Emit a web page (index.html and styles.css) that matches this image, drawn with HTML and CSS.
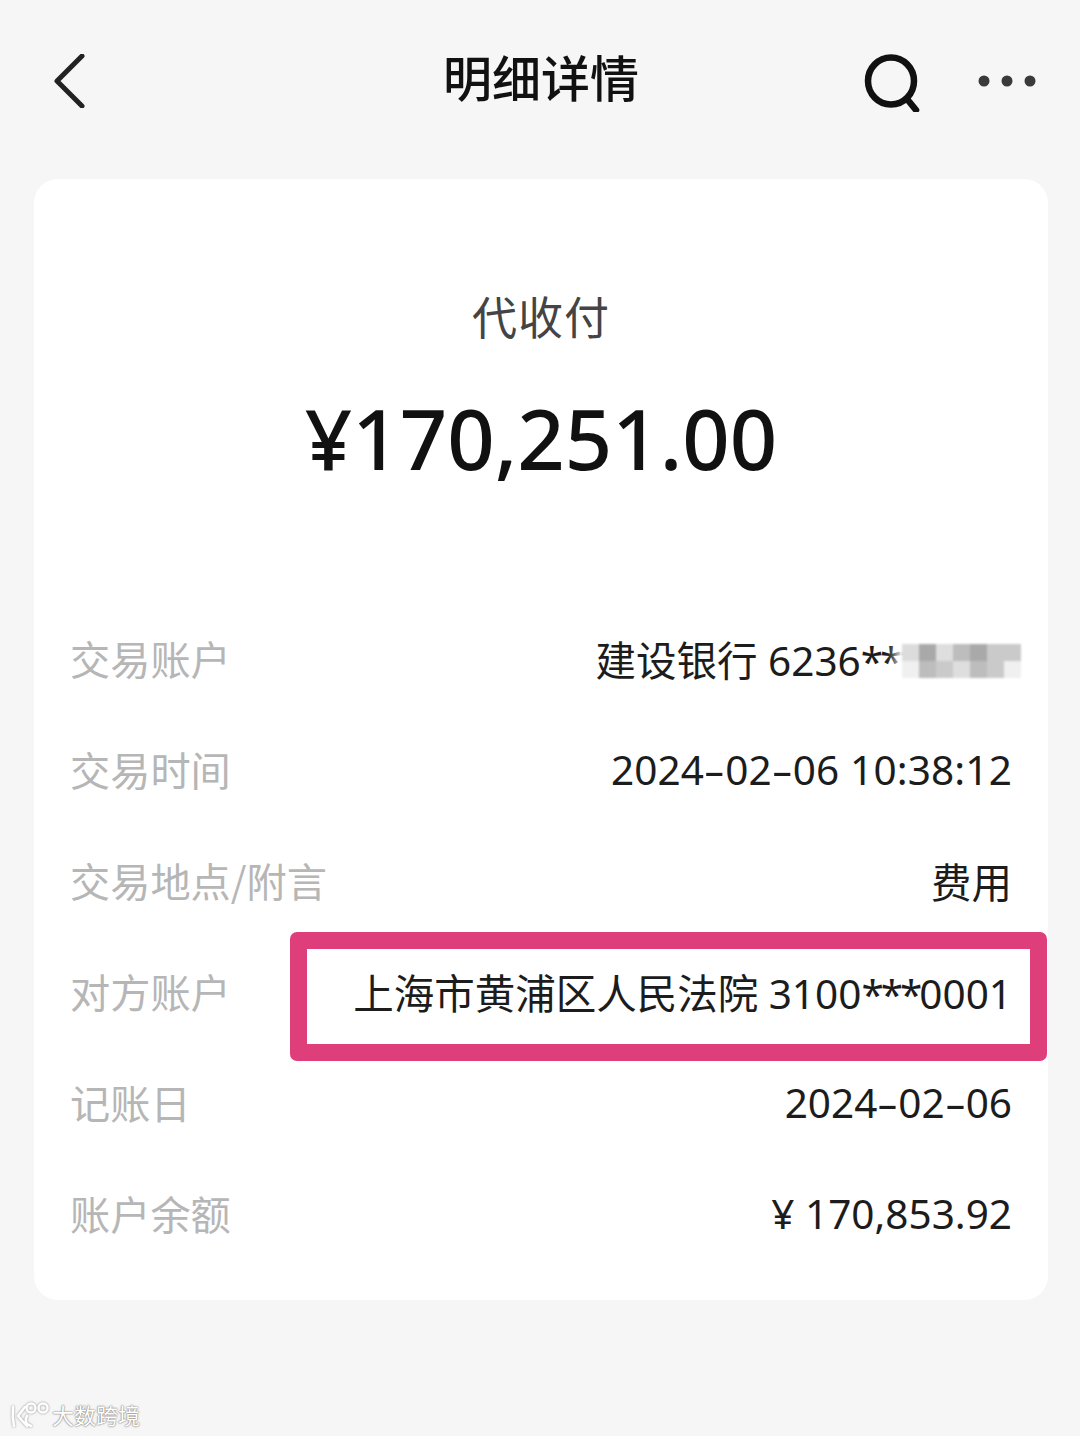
FILE: index.html
```html
<!DOCTYPE html>
<html lang="zh-CN">
<head>
<meta charset="utf-8">
<title>明细详情</title>
<link rel="stylesheet" href="styles.css">
</head>
<body>
<div class="page">
  <header class="nav">
    <svg class="icon-back" width="32" height="54" viewBox="0 0 32 54"><path d="M28 2 L3 27 L28 52"/></svg>
    <h1 class="nav-title">明细详情</h1>
    <div class="nav-actions">
      <svg class="icon-search" width="58" height="58" viewBox="0 0 58 58"><ellipse cx="27" cy="27" rx="23" ry="23.5"/><path d="M43 45 L52 56"/></svg>
      <svg class="icon-more" width="58" height="14" viewBox="0 0 58 14"><circle cx="6" cy="7" r="5.5"/><circle cx="29" cy="7" r="5.5"/><circle cx="52" cy="7" r="5.5"/></svg>
    </div>
  </header>
  <main class="card">
    <section class="summary">
      <div class="summary-type">代收付</div>
      <div class="summary-amount">¥170,251.00</div>
    </section>
    <section class="rows">
      <div class="row"><span class="label">交易账户</span>
        <span class="value value-masked">建设银行 6236<span class="stars">***</span><span class="masked-tail">****</span>
          <span class="mosaic">
            <i class="m1"></i><i class="m2"></i><i class="m5"></i><i class="m3"></i><i class="m2"></i><i class="m4"></i><i class="m4"></i>
            <i class="m6"></i><i class="m3"></i><i class="m4"></i><i class="m5"></i><i class="m3"></i><i class="m4"></i><i class="m6"></i>
          </span>
        </span>
      </div>
      <div class="row"><span class="label">交易时间</span><span class="value value-time">2024<span class="dash">-</span>02<span class="dash">-</span>06 10:38:12</span></div>
      <div class="row"><span class="label">交易地点/附言</span><span class="value">费用</span></div>
      <div class="row"><span class="label">对方账户</span><span class="value">上海市黄浦区人民法院 3100<span class="stars">***</span>0001</span><span class="highlight"></span></div>
      <div class="row"><span class="label">记账日</span><span class="value">2024<span class="dash">-</span>02<span class="dash">-</span>06</span></div>
      <div class="row"><span class="label">账户余额</span><span class="value">¥ 170,853.92</span></div>
    </section>
  </main>
  <footer class="watermark">
    <svg class="wm-logo" width="43" height="30" viewBox="0 0 43 30"><path d="M4 8 Q3 18 5 27 M16 8 L9 17 L18 27"/><path d="M22 27 Q14 24 18 17"/><circle cx="22" cy="9" r="4.5"/><circle cx="34" cy="9" r="4.5"/></svg>
    <span class="wm-text">大数跨境</span>
  </footer>
</div>
</body>
</html>
```
FILE: styles.css
```css
* { box-sizing: border-box; }
html, body { margin: 0; padding: 0; }
body {
  background: #f6f6f6;
  font-family: "Noto Sans", "Noto Sans CJK SC", sans-serif;
  color: #1a1a1a;
}
.page {
  width: 1080px;
  height: 1436px;
  overflow: hidden;
  display: flex;
  flex-direction: column;
}
.nav {
  height: 179px;
  padding: 0 43px 18px 54px;
  display: flex;
  align-items: center;
  justify-content: space-between;
  position: relative;
}
.icon-back path {
  fill: none;
  stroke: #222;
  stroke-width: 5;
  stroke-linecap: round;
  stroke-linejoin: round;
}
.nav-title {
  margin: 0;
  position: absolute;
  left: 2px;
  right: 0;
  top: 47px;
  text-align: center;
  font-family: "Noto Sans CJK SC", sans-serif;
  font-size: 49px;
  line-height: 58px;
  font-weight: 500;
  color: #111;
}
.nav-actions {
  display: flex;
  align-items: center;
  gap: 57px;
}
.icon-search { margin-top: 5px; }
.icon-search ellipse, .icon-search path {
  fill: none;
  stroke: #111;
  stroke-width: 6.5;
  stroke-linecap: round;
}
.icon-more { fill: #3a3a3a; margin-top: 1px; margin-left: -1px; margin-right: 1px; }
.card {
  margin: 0 32px 0 34px;
  height: 1121px;
  background: #fff;
  border-radius: 24px;
  padding: 0 36px;
}
.summary {
  height: 426px;
  text-align: center;
  padding-top: 105px;
}
.summary-type {
  font-family: "Noto Sans CJK SC", sans-serif;
  font-size: 45px;
  line-height: 64px;
  color: #444;
  letter-spacing: 1px;
}
.summary-amount {
  margin-top: 42px;
  font-size: 83px;
  line-height: 96px;
  font-weight: 500;
  color: #111;
}
.rows { display: flex; flex-direction: column; }
.row {
  height: 111px;
  display: flex;
  align-items: center;
  justify-content: space-between;
  position: relative;
}
.label {
  font-family: "Noto Sans CJK SC", sans-serif;
  font-size: 40.2px;
  color: #b6b6b6;
  margin-top: -6px;
}
.value {
  font-size: 40.5px;
  color: #1c1c1c;
  position: relative;
  white-space: nowrap;
  margin-top: -5px;
}
.value-time { letter-spacing: 0.15px; }
.dash {
  display: inline-block;
  width: 21px;
  text-align: center;
  transform: scaleX(1.65);
}
.stars { letter-spacing: -3px; }
.value-masked { margin-right: -8px; }
.masked-tail { color: #ccc; letter-spacing: 3px; }
.mosaic {
  position: absolute;
  right: -1px;
  top: 15px;
  width: 119px;
  height: 34px;
  display: grid;
  grid-template-columns: repeat(7, 17px);
  grid-auto-rows: 17px;
  background: #fff;
  box-shadow: 0 0 10px 6px #fff;
  filter: blur(0.8px);
}
.mosaic i { display: block; }
.m1 { background: #dcdcdc; }
.m2 { background: #a9a9a9; }
.m3 { background: #bdbdbd; }
.m4 { background: #cacaca; }
.m5 { background: #dedede; }
.m6 { background: #f0f0f0; }
.highlight {
  position: absolute;
  left: 220px;
  right: -35px;
  top: -6px;
  height: 129px;
  border: 17px solid #de3f7b;
  border-radius: 7px;
}
.watermark {
  display: flex;
  align-items: center;
  gap: 0;
  margin: 97px 0 0 9px;
  height: 34px;
}
.wm-logo path, .wm-logo circle {
  fill: none;
  stroke: #fff;
  stroke-width: 2.5;
  stroke-linecap: round;
}
.wm-logo { filter: drop-shadow(0 0 1px #8e8e8e); }
.wm-text {
  font-family: "Noto Sans CJK SC", sans-serif;
  font-size: 22px;
  color: #fff;
  text-shadow: 0 0 2px #777, 0 0 1px #777;
}
```
